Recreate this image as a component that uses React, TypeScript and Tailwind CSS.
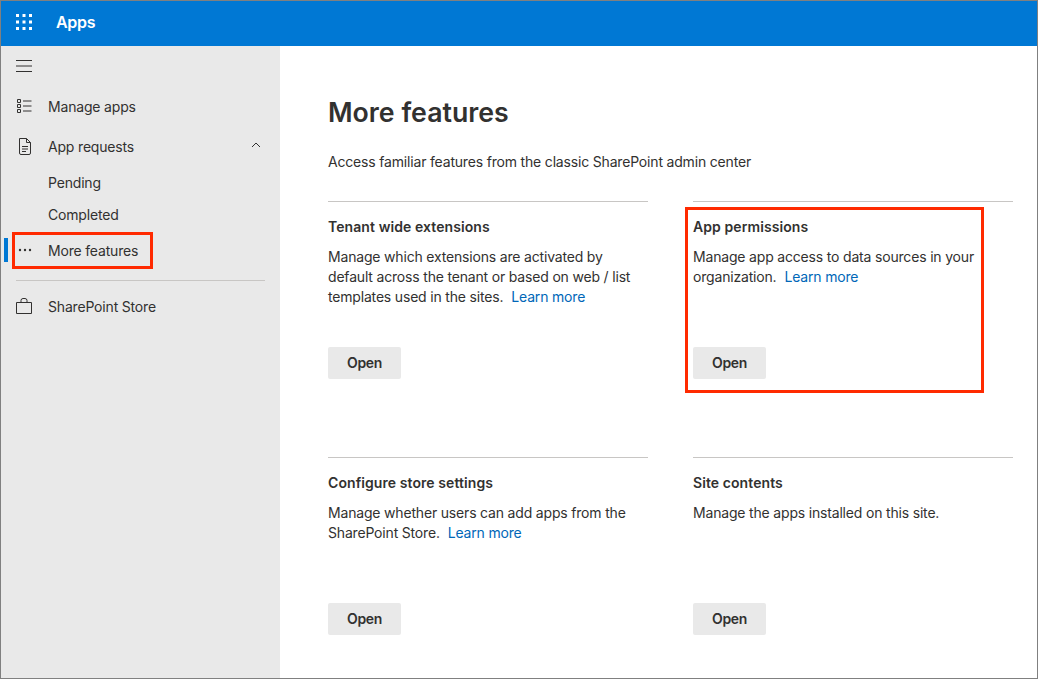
import React from "react";

function Card({ title, text, link }: { title: string; text: string; link?: boolean }) {
  return (
    <div className="h-[256px] border-t border-[#c8c6c4] pt-[15px]">
      <h3 className="text-[14px] leading-[20px] font-semibold tracking-[0.08px] text-[#323130]">{title}</h3>
      <p className="mt-[10px] h-[80px] text-[14px] leading-[20px] tracking-[-0.18px] text-[#323130] whitespace-pre-line">
        {text}
        {link && <span className="ml-[8px] text-[#0067b8]">Learn more</span>}
      </p>
      <button className="mt-[20px] h-[32px] w-[73px] rounded-[2px] bg-[#e9e9e9] text-[14px] leading-[20px] font-semibold tracking-[-0.3px] text-[#323130]">
        Open
      </button>
    </div>
  );
}

function NavItem({ icon, label, className = "" }: { icon?: React.ReactNode; label: string; className?: string }) {
  return (
    <div className={`flex items-center text-[14px] tracking-[-0.18px] text-[#323130] ${className}`}>
      <div className="flex w-[47px] items-center pl-[15px]">{icon}</div>
      <span>{label}</span>
    </div>
  );
}

const stroke = { fill: "none", stroke: "#323130", strokeWidth: 1 };

export default function App() {
  return (
    <div
      className="relative flex h-[679px] w-[1038px] flex-col overflow-hidden border border-[#808080] bg-white"
      style={{ fontFamily: "Inter, 'Liberation Sans', sans-serif" }}
    >
      <header className="flex h-[45px] shrink-0 items-center bg-[#0078d4] pb-[3px] text-white">
        <svg width="16" height="16" viewBox="0 0 16 16" className="ml-[15px]" fill="#fff">
          {[0, 6.5, 13].map((y) =>
            [0, 6.5, 13].map((x) => <rect key={`${x}-${y}`} x={x} y={y} width="3" height="3" />)
          )}
        </svg>
        <span className="ml-[24px] text-[16px] font-semibold tracking-[-0.3px]">Apps</span>
      </header>
      <div className="flex flex-1">
        <aside className="w-[279px] shrink-0 bg-[#e9e9e9]">
          <div className="flex h-[40px] items-center pl-[15px]">
            <svg width="16" height="12" viewBox="0 0 16 12" {...stroke}>
              <path d="M0 .5h16M0 6h16M0 11.5h16" />
            </svg>
          </div>
          <NavItem
            label="Manage apps"
            className="h-[40px]"
            icon={
              <svg width="15" height="14" viewBox="0 0 15 14" {...stroke} className="ml-px">
                <path d="M.5.5h3v3h-3zM.5 5.5h3v3h-3zM.5 10.5h3v3h-3zM6 2h8.5M6 7h8.5M6 12h8.5" />
              </svg>
            }
          />
          <div className="relative">
            <NavItem
              label="App requests"
              className="h-[40px]"
              icon={
                <svg width="14" height="17" viewBox="0 0 14 17" {...stroke} className="ml-[2px]">
                  <path d="M1.5.5h7l4 4v10.5a1.5 1.5 0 0 1-1.5 1.5H3A1.5 1.5 0 0 1 1.5 15zM8.5.5v4h4M4 8.5h6M4 11h6M4 13.5h4" />
                </svg>
              }
            />
            <svg width="10" height="6" viewBox="0 0 10 6" {...stroke} className="absolute left-[250px] top-[16px]">
              <path d="M1 5l4-4 4 4" />
            </svg>
          </div>
          <NavItem label="Pending" className="h-[32px]" />
          <NavItem label="Completed" className="h-[32px]" />
          <div className="relative">
            <NavItem
              label="More features"
              className="h-[40px]"
              icon={
                <svg width="14" height="4" viewBox="0 0 14 4" fill="#323130" className="ml-[2px]">
                  <circle cx="2" cy="2" r="1.2" />
                  <circle cx="7" cy="2" r="1.2" />
                  <circle cx="12" cy="2" r="1.2" />
                </svg>
              }
            />
            <div className="absolute left-[3px] top-[8px] h-[24px] w-[4px] bg-[#0078d4]" />
          </div>
          <div className="mx-[15px] mt-[10px] mb-[8px] border-t border-[#c8c6c4]" />
          <NavItem
            label="SharePoint Store"
            className="h-[34px]"
            icon={
              <svg width="16" height="16" viewBox="0 0 16 16" {...stroke}>
                <path d="M.5 4.5h15v11H.5zM5 4.5V2.5a2 2 0 0 1 2-2h2a2 2 0 0 1 2 2v2" />
              </svg>
            }
          />
        </aside>
        <main className="flex-1 pl-[48px] pr-[24px]">
          <h1 className="mt-[48px] text-[26.7px] leading-[36px] font-semibold text-[#323130]">More features</h1>
          <p className="mt-[22px] text-[14px] leading-[20px] tracking-[-0.18px] text-[#323130]">
            Access familiar features from the classic SharePoint admin center
          </p>
          <div className="mt-[29px] grid grid-cols-[320px_320px] gap-x-[45px]">
            <Card
              title="Tenant wide extensions"
              text={"Manage which extensions are activated by\ndefault across the tenant or based on web / list\ntemplates used in the sites."}
              link
            />
            <Card
              title="App permissions"
              text={"Manage app access to data sources in your\norganization."}
              link
            />
            <Card
              title="Configure store settings"
              text={"Manage whether users can add apps from the\nSharePoint Store."}
              link
            />
            <Card title="Site contents" text="Manage the apps installed on this site." />
          </div>
        </main>
      </div>
      <div className="absolute left-[11px] top-[231px] h-[37px] w-[141px] border-[3px] border-[#ff2a00]" />
      <div className="absolute left-[684px] top-[206px] h-[186px] w-[299px] border-[3px] border-[#ff2a00]" />
    </div>
  );
}
